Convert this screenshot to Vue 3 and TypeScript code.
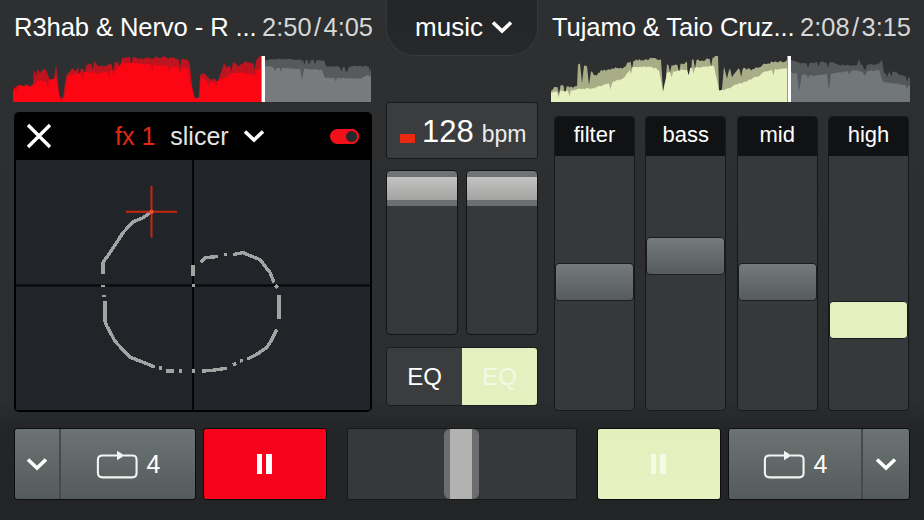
<script setup lang="ts">
interface Wave {
  viewBox: string
  played: string
  playedInner: string
  rest: string
  restInner: string
  head: number
}

// Points are in page pixels, the viewBox of each wave starts at its own corner.
// Steps along the outline and adds a fixed jitter so the edge looks like audio.
function area(points: string, left: number, right: number, rough = 1.4) {
  const pts = points.split(' ').map(p => p.split(',').map(Number))
  const out: string[] = []
  for (let i = 0; i < pts.length - 1; i++) {
    const [x0, y0] = pts[i]
    const [x1, y1] = pts[i + 1]
    const steps = Math.max(1, Math.round((x1 - x0) / 1.5))
    for (let s = 0; s < steps; s++) {
      const x = x0 + ((x1 - x0) * s) / steps
      const y = y0 + ((y1 - y0) * s) / steps
      const n = Math.sin(x * 12.9898) * 43758.5453
      const jitter = (n - Math.floor(n) - 0.5) * 2 * rough
      const spike = n - Math.floor(n) > 0.93 ? 5 * rough : 0
      out.push(`${x.toFixed(1)},${Math.min(102, y + jitter + spike).toFixed(1)}`)
    }
  }
  return `M${left},102 L${out.join(' ')} L${right},${pts[pts.length - 1][1]} L${right},102 Z`
}

const leftWave: Wave = {
  viewBox: '13 56 360 46',
  played: area('13,86 28,85 33,84 34,70 36,68 40,73 44,68 47,72 50,80 54,79 56,65 58,80 59,95 61,99 63,99 65,84 67,74 72,69 75,71 78,67 82,70 86,66 90,64 94,61 97,66 100,67 105,65 110,64 118,62 123,58 130,57 140,59 150,58 160,57 170,58 180,59 187,59 190,65 192,85 194,98 199,98 200,75 205,73 209,79 218,80 222,70 224,63 227,68 233,62 238,66 245,62 252,64 256,60 261,56', 13, 261),
  playedInner: area('13,87 33,86 38,80 46,82 56,78 60,99 64,99 67,78 75,74 90,72 100,74 115,70 123,63 140,64 160,65 180,68 188,68 192,88 195,98 199,98 201,78 210,82 222,80 230,74 240,72 250,74 261,68', 13, 261, 1),
  rest: area('265,60 280,59 300,60 324,60 326,66 340,67 365,66 370,67 371,67', 265, 371, 0.8),
  restInner: area('265,66 278,68 300,69 302,80 304,69 322,70 325,78 345,78 360,79 370,74 371,74', 265, 371, 0.6),
  head: 263,
}

const rightWave: Wave = {
  viewBox: '552 56 360 46',
  played: area('552,90 560,86 578,87 579,64 581,64 583,84 585,66 588,66 590,84 592,72 598,76 602,70 610,70 618,68 625,68 630,62 636,60 645,60 650,59 656,58 662,60 664,90 666,90 668,64 680,65 688,62 689,88 691,88 693,60 705,60 715,58 717,54 719,54 720,88 723,88 725,66 728,78 731,68 733,78 738,70 745,68 755,70 765,64 775,62 785,62 788,60', 552, 788),
  playedInner: area('552,92 575,90 595,88 610,84 625,78 632,68 650,66 660,70 664,92 668,72 688,70 693,68 715,66 720,90 725,90 735,86 745,82 755,78 770,70 788,68', 552, 788, 1),
  rest: area('792,60 800,63 815,63 818,62 835,63 840,65 858,65 860,59 862,65 880,64 883,60 885,73 895,72 905,76 911,78', 792, 911, 0.8),
  restInner: area('792,72 798,74 800,92 803,74 815,76 828,74 830,90 832,74 858,70 862,72 880,70 884,82 911,86', 792, 911, 0.6),
  head: 790,
}

const bands = [
  { name: 'filter', top: 107, on: false },
  { name: 'bass', top: 81, on: false },
  { name: 'mid', top: 107, on: false },
  { name: 'high', top: 145, on: true },
]

const trail = [
  'M151,212 L143,218 L133,222 L123,233 L112,250 L103,263 L103,274',
  'M103,285 L103,288',
  'M104,296 L104,298',
  'M105,302 L105,322 L107,327 L115,342 L130,358 L143,363 L155,368',
  'M159,369 L162,369 M166,372 L174,372 M179,372 L182,372 M192,372 L195,372',
  'M202,372 L214,371 L227,369 M233,366 L236,364 M240,362 L243,361',
  'M247,360 L257,355 L267,348 L272,340 L277,330',
  'M279,320 L279,296 M275,286 L278,288',
  'M274,283 L270,273 L260,260 L250,256 L243,253 L233,255 M224,255 L227,255',
  'M218,257 L205,258 L201,263',
  'M193,265 L193,276 M192,286 L195,286',
]
</script>

<template>
  <div class="app">
    <main class="top">
      <section class="deck">
        <header class="track">
          <span class="title">R3hab &amp; Nervo - R ...</span>
          <span class="time">2:50<i>/</i>4:05</span>
        </header>
        <svg class="wave" :viewBox="leftWave.viewBox" preserveAspectRatio="none">
          <path :d="leftWave.rest" fill="#565a5c" />
          <path :d="leftWave.restInner" fill="#777b7d" />
          <path :d="leftWave.played" fill="#bd1420" />
          <path :d="leftWave.playedInner" fill="#fb0612" />
          <rect :x="leftWave.head - 1.5" y="56" width="3.5" height="46" fill="#fff" />
        </svg>

        <div class="fx">
          <div class="fx-bar">
            <svg class="close" viewBox="0 0 26 26">
              <path d="M2 2 L24 24 M24 2 L2 24" fill="none" stroke="#fff" stroke-width="3.4" />
            </svg>
            <span class="fx-name">fx 1</span>
            <span class="fx-kind">slicer</span>
            <svg class="chev fx-chev" viewBox="0 0 22 14">
              <path d="M2 2.5 L11 11 L20 2.5" />
            </svg>
            <span class="toggle"><b /></span>
          </div>
          <svg class="pad" viewBox="16 160 354 251" preserveAspectRatio="none">
            <path d="M193 160 V411 M16 286 H370" stroke="#050607" stroke-width="2" fill="none" />
            <path
              v-for="(d, i) in trail"
              :key="i"
              :d="d"
              fill="none"
              stroke="#a2a4a4"
              stroke-width="3.4"
              shape-rendering="crispEdges"
            />
            <path d="M126 212 H177 M151.5 186 V238" stroke="#c8260f" stroke-width="2" fill="none" />
            <circle cx="151.5" cy="212" r="2.2" fill="#e8502a" />
          </svg>
        </div>
      </section>

      <section class="center">
        <button class="tab">
          music
          <svg class="chev" viewBox="0 0 22 14"><path d="M2 2.5 L11 11 L20 2.5" /></svg>
        </button>
        <div class="bpm">
          <span class="minus" />
          <span class="bpm-value">128</span>
          <span class="bpm-unit">bpm</span>
        </div>
        <div class="pitch">
          <div v-for="n in 2" :key="n" class="pitch-track">
            <div class="pitch-knob" />
          </div>
        </div>
        <div class="eq-switch">
          <span>EQ</span>
          <span class="eq-on">EQ</span>
        </div>
      </section>

      <section class="deck deck-right">
        <header class="track">
          <span class="title">Tujamo &amp; Taio Cruz...</span>
          <span class="time">2:08<i>/</i>3:15</span>
        </header>
        <svg class="wave" :viewBox="rightWave.viewBox" preserveAspectRatio="none">
          <path :d="rightWave.rest" fill="#54585a" />
          <path :d="rightWave.restInner" fill="#72777a" />
          <path :d="rightWave.played" fill="#a8ad88" />
          <path :d="rightWave.playedInner" fill="#e7f0bf" />
          <rect :x="rightWave.head - 1.5" y="56" width="3.5" height="46" fill="#fff" />
        </svg>

        <div class="bands">
          <div v-for="band in bands" :key="band.name" class="band">
            <div class="band-name">{{ band.name }}</div>
            <div class="band-track">
              <div class="band-knob" :class="{ on: band.on }" :style="{ top: band.top + 'px' }" />
            </div>
          </div>
        </div>
      </section>
    </main>

    <footer class="bottom">
      <div class="loop">
        <button class="drop">
          <svg class="chev" viewBox="0 0 22 14"><path d="M2 2.5 L11 11 L20 2.5" /></svg>
        </button>
        <button class="loop-main">
          <svg class="loop-icon" viewBox="0 0 44 30">
            <path d="M22 5.5 H7 Q2 5.5 2 10 V24 Q2 28.5 7 28.5 H38 Q42.5 28.5 42.5 24 V10 Q42.5 5.5 38 5.5 H29" />
            <path class="arrow" d="M22 0.5 L30 5.5 L22 10.5 Z" />
          </svg>
          <span>4</span>
        </button>
      </div>
      <button class="play red">
        <span class="pause"><b /><b /></span>
      </button>
      <div class="fader">
        <div class="fader-knob" />
      </div>
      <button class="play lime">
        <span class="pause"><b /><b /></span>
      </button>
      <div class="loop">
        <button class="loop-main wide">
          <svg class="loop-icon" viewBox="0 0 44 30">
            <path d="M22 5.5 H7 Q2 5.5 2 10 V24 Q2 28.5 7 28.5 H38 Q42.5 28.5 42.5 24 V10 Q42.5 5.5 38 5.5 H29" />
            <path class="arrow" d="M22 0.5 L30 5.5 L22 10.5 Z" />
          </svg>
          <span>4</span>
        </button>
        <button class="drop drop-right">
          <svg class="chev" viewBox="0 0 22 14"><path d="M2 2.5 L11 11 L20 2.5" /></svg>
        </button>
      </div>
    </footer>
  </div>
</template>

<style scoped>
.app {
  width: 924px;
  height: 520px;
  overflow: hidden;
  display: flex;
  flex-direction: column;
  background: linear-gradient(#2d2f31 0, #2b2d2f 400px, #242527 430px, #232426 100%);
  color: #fff;
  font-family: "Liberation Sans", Arial, sans-serif;
}

button {
  font: inherit;
  color: inherit;
  border: none;
  padding: 0;
}

.top {
  display: grid;
  grid-template-columns: 360px 152px 360px;
  column-gap: 13px;
  padding-left: 13px;
  height: 428px;
}

.deck {
  display: flex;
  flex-direction: column;
  min-width: 0;
}

.track {
  height: 56px;
  box-sizing: border-box;
  display: flex;
  justify-content: space-between;
  align-items: center;
  padding: 0 0 2px 1px;
  white-space: nowrap;
}

.title {
  font-size: 25.6px;
  letter-spacing: -0.1px;
}

.time {
  font-size: 25.4px;
  color: #d6d8d8;
}

.time i {
  font-style: normal;
  margin: 0 2.5px;
}

.wave {
  display: block;
  width: 360px;
  height: 46px;
}

/* fx pad */
.fx {
  margin: 10px 1px 0 1px;
  width: 358px;
  height: 300px;
  display: flex;
  flex-direction: column;
  background: #000;
  border-radius: 5px;
  overflow: hidden;
}

.fx-bar {
  height: 48px;
  flex: none;
  display: flex;
  align-items: center;
  font-size: 25px;
  padding: 0 13px 0 12px;
}

.close {
  width: 26px;
  height: 26px;
}

.fx-name {
  margin-left: 63px;
  color: #e02a14;
}

.fx-kind {
  margin-left: 15px;
  color: #e4e4e4;
}

.fx-chev {
  margin-left: 14px;
}

.toggle {
  margin-left: auto;
  width: 29px;
  height: 15px;
  border-radius: 8px;
  background: #f2101a;
  position: relative;
}

.toggle b {
  position: absolute;
  right: 0;
  top: 0;
  width: 15px;
  height: 15px;
  box-sizing: border-box;
  border-radius: 50%;
  background: #26282a;
  border: 2px solid #f2101a;
}

.pad {
  flex: 1;
  display: block;
  margin: 0 2px 2px;
  width: 354px;
  background: #212429;
}

.chev {
  width: 22px;
  height: 14px;
}

.chev path {
  fill: none;
  stroke: #fff;
  stroke-width: 3.6;
}

/* center column */
.center {
  display: flex;
  flex-direction: column;
}

.tab {
  height: 57px;
  margin-top: -1px;
  flex: none;
  display: flex;
  align-items: center;
  justify-content: center;
  gap: 8px;
  font-size: 26px;
  padding-left: 4px;
  background: linear-gradient(#232527, #26282a);
  border: 1px solid #36393b;
  border-top: none;
  border-radius: 0 0 28px 28px;
}

.bpm {
  margin-top: 46px;
  height: 57px;
  box-sizing: border-box;
  display: flex;
  align-items: center;
  padding-top: 3px;
  background: #3a3c3e;
  border: 1px solid #17181a;
  border-radius: 3px;
}

.minus {
  width: 15px;
  height: 9px;
  margin: 13px 7px 0 13px;
  background: #ec2a12;
  border-radius: 1px;
}

.bpm-value {
  font-size: 31px;
}

.bpm-unit {
  font-size: 23px;
  margin: 4px 0 0 8px;
  color: #ececec;
}

.pitch {
  margin-top: 11px;
  display: flex;
  justify-content: space-between;
  width: 152px;
}

.pitch-track {
  width: 72px;
  height: 165px;
  box-sizing: border-box;
  background: #36393b;
  border: 1px solid #131415;
  border-radius: 5px;
  overflow: hidden;
}

.pitch-knob {
  height: 35px;
  background: linear-gradient(#707274 0 6px, #c4c4c2 6px, #a2a2a1 29px, #6c6e70 29px);
}

.eq-switch {
  margin-top: 12px;
  height: 59px;
  width: 152px;
  display: flex;
  font-size: 24px;
  box-sizing: border-box;
  background: #3a3c3e;
  border: 1px solid #1b1c1e;
  border-radius: 4px;
  overflow: hidden;
}

.eq-switch span {
  width: 75px;
  display: flex;
  align-items: center;
  justify-content: center;
}

.eq-switch .eq-on {
  flex: 1;
  background: #e5f0c0;
  color: #f4f8e4;
}

/* eq bands */
.bands {
  margin: 14px 2px 0 3px;
  display: flex;
  justify-content: space-between;
}

.band {
  width: 81px;
  height: 295px;
  display: flex;
  flex-direction: column;
  border-radius: 4px;
  overflow: hidden;
  border: 1px solid #17181a;
  box-sizing: border-box;
  background: #36393b;
}

.band-name {
  height: 39px;
  flex: none;
  background: #111213;
  font-size: 22px;
  display: flex;
  align-items: center;
  justify-content: center;
  padding-bottom: 4px;
  box-sizing: border-box;
}

.band-track {
  flex: 1;
  position: relative;
}

.band-knob {
  position: absolute;
  left: 0;
  right: 0;
  height: 38px;
  border-radius: 4px;
  border: 1px solid #1b1c1e;
  box-sizing: border-box;
  background: linear-gradient(#757b7b, #565c5e);
}

.band-knob.on {
  background: #e5f0c0;
}

/* bottom strip */
.bottom {
  display: flex;
  padding-left: 14px;
  height: 72px;
}

.loop {
  width: 182px;
  height: 72px;
  display: flex;
  box-sizing: border-box;
  border: 1px solid #0c0d0e;
  border-radius: 3px;
  overflow: hidden;
  background: linear-gradient(#6b7373, #555b5b);
}

.drop {
  width: 46px;
  flex: none;
  background: none;
  display: flex;
  align-items: center;
  justify-content: center;
  border-right: 2px solid #454a4b;
}

.drop-right {
  width: 48px;
  border-right: none;
  border-left: 2px solid #454a4b;
}

.loop-main {
  flex: 1;
  background: none;
  display: flex;
  align-items: center;
  justify-content: center;
  gap: 9px;
  font-size: 25px;
}

.loop-icon {
  width: 42px;
  height: 29px;
}

.loop-icon path {
  fill: none;
  stroke: #f2f4f4;
  stroke-width: 2.2;
}

.loop-icon .arrow {
  fill: #f2f4f4;
  stroke: none;
}

.play {
  width: 124px;
  height: 72px;
  box-sizing: border-box;
  border: 1px solid #0c0d0e;
  border-radius: 3px;
  margin-left: 7px;
  display: flex;
  align-items: center;
  justify-content: center;
}

.play.red {
  background: #f6031b;
}

.play.lime {
  margin-left: 20px;
  background: linear-gradient(#e3f0bc, #e8f1c2);
}

.play.lime + .loop {
  margin-left: 7px;
}

.play.lime .pause b {
  background: #f6f9e4;
}

.pause {
  display: flex;
  gap: 4px;
  margin-right: 2px;
}

.pause b {
  width: 5.5px;
  height: 20px;
  background: #fff;
}

.fader {
  margin-left: 20px;
  width: 230px;
  height: 72px;
  box-sizing: border-box;
  background: #36393b;
  border: 1px solid #17181a;
  border-radius: 3px;
  position: relative;
}

.fader-knob {
  position: absolute;
  left: 96px;
  top: 0;
  bottom: 0;
  width: 35px;
  border-radius: 6px;
  background: linear-gradient(90deg, #6b6d6f 0 6px, #b2b2b1 6px, #b2b2b1 28px, #6b6d6f 28px);
}
</style>

<style>
html,
body {
  background: #2b2d2f;
}
</style>
